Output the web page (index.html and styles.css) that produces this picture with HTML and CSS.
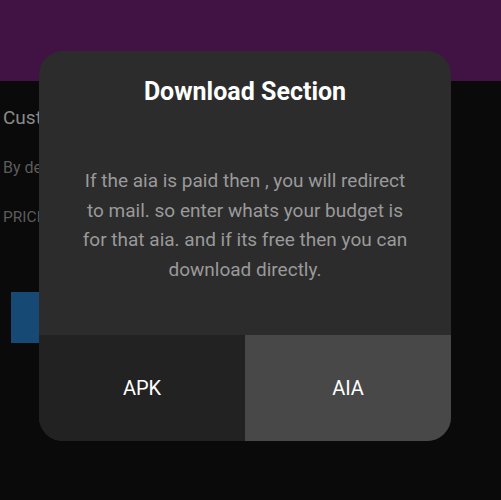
FILE: index.html
```html
<!DOCTYPE html>
<html lang="en">
<head>
    <meta charset="UTF-8">
    <meta name="viewport" content="width=device-width, initial-scale=1.0">
    <title>Download Section</title>
    <link rel="stylesheet" href="styles.css">
</head>
<body>
    <div class="page">
        <div class="appbar"></div>
        <div class="content">
            <div class="item-title">Custom Extension</div>
            <div class="item-author">By developer</div>
            <div class="item-price">PRICE : Free</div>
            <div class="buy-btn"></div>
        </div>
    </div>

    <div class="dialog">
        <div class="dialog-title">Download Section</div>
        <div class="dialog-message">If the aia is paid then , you will redirect to mail. so enter whats your budget is for that aia. and if its free then you can download directly.</div>
        <div class="dialog-actions">
            <button class="action-btn apk">APK</button>
            <button class="action-btn aia">AIA</button>
        </div>
    </div>
</body>
</html>
```

FILE: styles.css
```css
* {
    margin: 0;
    padding: 0;
    box-sizing: border-box;
}

body {
    font-family: Roboto, "Noto Sans", sans-serif;
    background: #0a0a0a;
    width: 501px;
    height: 500px;
    overflow: hidden;
}

.appbar {
    height: 81px;
    background: #411244;
}

.content {
    padding: 25px 3px 0;
}

.item-title {
    color: #8a8a8a;
    font-size: 19px;
    line-height: 24px;
}

.item-author {
    color: #5c5c5c;
    font-size: 16px;
    line-height: 20px;
    margin-top: 28px;
}

.item-price {
    color: #5c5c5c;
    font-size: 15.5px;
    line-height: 20px;
    margin-top: 29px;
}

.buy-btn {
    width: 120px;
    height: 51px;
    margin: 65px 0 0 8px;
    background: #164a74;
}

.dialog {
    position: absolute;
    left: 39px;
    top: 51px;
    width: 412px;
    height: 390px;
    background: #2c2c2c;
    border-radius: 24px;
    overflow: hidden;
    display: flex;
    flex-direction: column;
}

.dialog-title {
    color: #fff;
    font-size: 25px;
    font-weight: 700;
    text-align: center;
    padding-top: 26px;
}

.dialog-message {
    flex: 1;
    color: #9a9a9a;
    font-size: 19px;
    line-height: 29.5px;
    text-align: center;
    padding: 60px 38px 0;
}

.dialog-actions {
    display: grid;
    grid-template-columns: 206px 1fr;
    height: 106px;
}

.action-btn {
    border: none;
    font-family: inherit;
    font-size: 20px;
    color: #fff;
}

.apk {
    background: #222222;
}

.aia {
    background: #484848;
}
```
